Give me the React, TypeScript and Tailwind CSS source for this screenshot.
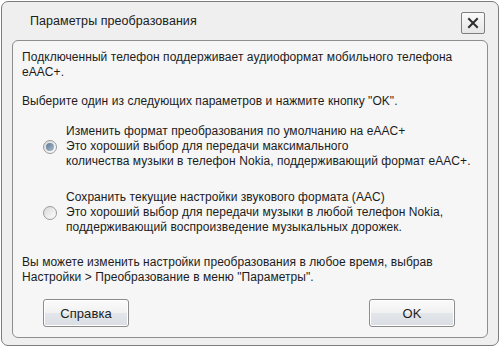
import React from 'react';

function Radio({ checked }: { checked?: boolean }) {
  return (
    <div className="w-[14px] h-[14px] rounded-full border border-[#9a9a9a] bg-gradient-to-br from-[#d8d8d8] to-[#ffffff] flex items-center justify-center shrink-0">
      {checked && <div className="w-[8px] h-[8px] rounded-full bg-gradient-to-br from-[#5f7891] to-[#a9bed3]" />}
    </div>
  );
}

function Option({ checked, lines }: { checked?: boolean; lines: string[] }) {
  return (
    <div className="flex items-center pl-[30px]">
      <Radio checked={checked} />
      <div className="pl-[9px]">
        {lines.map((l) => (
          <div key={l}>{l}</div>
        ))}
      </div>
    </div>
  );
}

function DlgButton({ label }: { label: string }) {
  return (
    <button className="w-[86px] h-[28px] rounded-[3px] border border-[#8c8c8c] bg-[linear-gradient(#fbfbfb_0%,#f1f1f1_50%,#e3e6ea_50%,#dadfe5_100%)] text-[13px] text-[#1e1e1e] shadow-[inset_0_0_0_1px_#ffffff]">
      {label}
    </button>
  );
}

export default function App() {
  return (
    <div className="w-[500px] h-[348px] bg-white pt-[1px] px-[1px] text-[12px] leading-[15px] tracking-[0.06px] text-[#1c1c1c] font-['Liberation_Sans',Arial,sans-serif]">
      <div className="h-[345px] rounded-[7px] border border-[#7c7c7c] bg-[#efefef] flex flex-col">
        {/* title bar */}
        <div className="h-[38px] flex items-center justify-between pl-[28px] pr-[13px]">
          <span className="text-[12.5px] text-[#202020]">Параметры преобразования</span>
          <div className="w-[24px] h-[22px] mt-[4px] rounded-[2px] border border-[#7f7f7f] bg-gradient-to-b from-[#fafafa] to-[#e6e6e6] flex items-center justify-center">
            <svg width="12" height="12" viewBox="0 0 12 12">
              <path d="M2 2 L10 10 M10 2 L2 10" stroke="#2f2f2f" strokeWidth="2" strokeLinecap="square" />
            </svg>
          </div>
        </div>

        {/* panel */}
        <div className="mx-[10px] flex-1 mb-[7px] rounded-[6px] border border-[#8e8e8e] bg-[#f6f6f6] pt-[9px] px-[9px] flex flex-col">
          <div>
            <div>Подключенный телефон поддерживает аудиоформат мобильного телефона</div>
            <div>eAAC+.</div>
          </div>
          <div className="mt-[14px]">Выберите один из следующих параметров и нажмите кнопку "OK".</div>
          <div className="mt-[15px] -ml-[9px]">
            <Option
              checked
              lines={[
                'Изменить формат преобразования по умолчанию на eAAC+',
                'Это хороший выбор для передачи максимального',
                'количества музыки в телефон Nokia, поддерживающий формат eAAC+.',
              ]}
            />
          </div>
          <div className="mt-[21px] -ml-[9px]">
            <Option
              lines={[
                'Сохранить текущие настройки звукового формата (AAC)',
                'Это хороший выбор для передачи музыки в любой телефон Nokia,',
                'поддерживающий воспроизведение музыкальных дорожек.',
              ]}
            />
          </div>
          <div className="mt-[20px]">
            <div>Вы можете изменить настройки преобразования в любое время, выбрав</div>
            <div>Настройки &gt; Преобразование в меню "Параметры".</div>
          </div>
          <div className="mt-[14px] flex justify-between pl-[21px] pr-[23px]">
            <DlgButton label="Справка" />
            <DlgButton label="OK" />
          </div>
        </div>
      </div>
    </div>
  );
}
